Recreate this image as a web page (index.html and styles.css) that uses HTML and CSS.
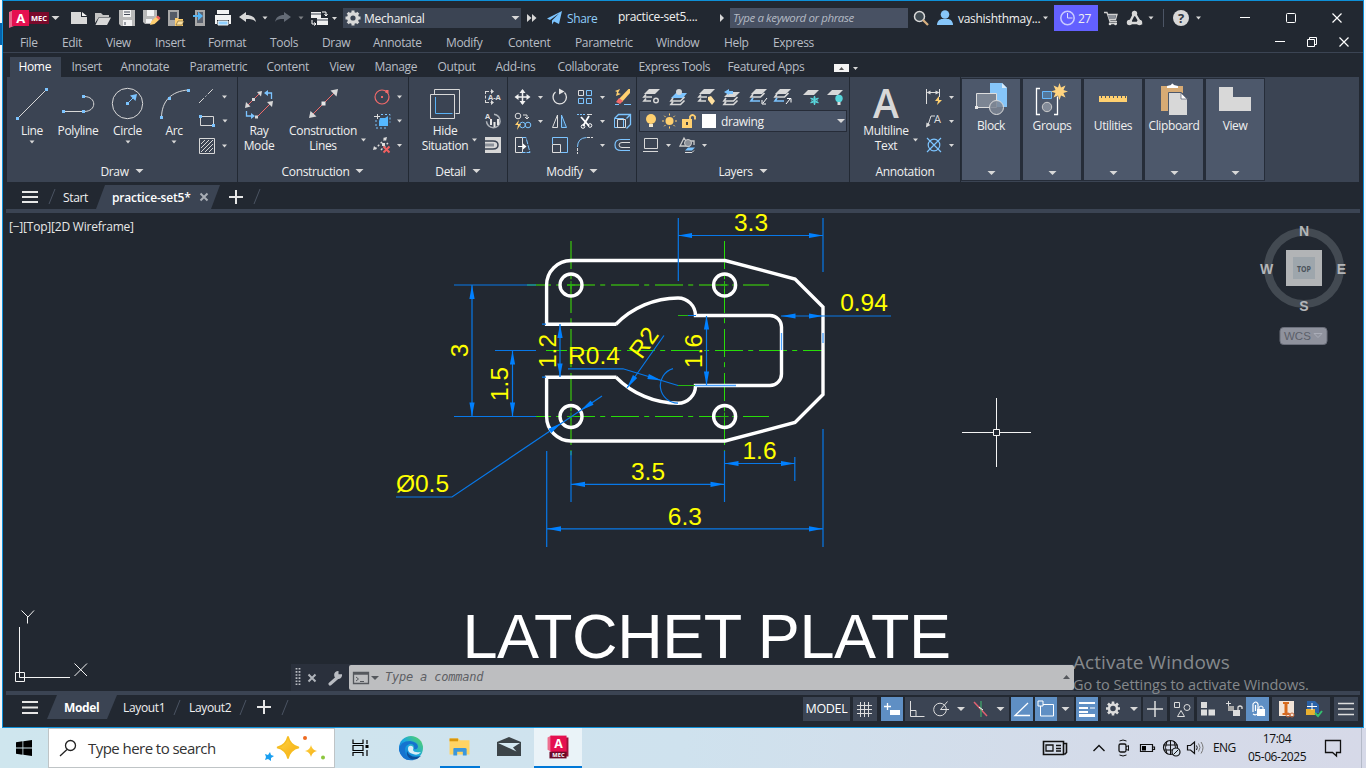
FILE: index.html
```html
<!DOCTYPE html>
<html lang="en">
<head>
<meta charset="utf-8">
<title>practice-set5</title>
<link rel="stylesheet" href="styles.css">
</head>
<body>
<svg class="defs" width="0" height="0">
  <defs>
    <path id="c" d="M-2.5-1.5h5L0 1.5z" fill="#d8d8d8"/>
    <path id="cc" d="M-4-2h8L0 2z" fill="#d8d8d8"/>
    <path id="arr" d="M0 0L14-2.6V2.6z" fill="#0080ff"/>
    <rect id="n" x="-1.5" y="-1.5" width="3" height="3" fill="#7cc4ff"/>
    <path id="lay" d="M5 0h11l-5 5H0z" fill="#d8d8d8"/>
    <path id="layl" d="M2 0L0 3h9.500l4-4" fill="none" stroke="#d8d8d8" stroke-width="1.700"/>
    <linearGradient id="edge" x1="0" y1="1" x2="1" y2="0"><stop offset="0" stop-color="#0a5bd0"/><stop offset=".5" stop-color="#1aa7e0"/><stop offset="1" stop-color="#5fdc50"/></linearGradient>
    <linearGradient id="gold" x1="0" y1="0" x2="1" y2="1"><stop offset="0" stop-color="#ffd84a"/><stop offset="1" stop-color="#f5a80c"/></linearGradient>
  </defs>
</svg>
<div class="window">
  <header class="titlebar">
    <svg width="57" height="31" viewBox="7 1 57 31"><path d="M9 12l5-2v16l-5 2z" fill="#e8668a"/><rect x="12" y="10" width="17" height="16" fill="#e51050"/><rect x="29" y="12" width="20" height="12" fill="#7a0a2b"/><text x="20.800" y="23" class="lgA">A</text><text x="39" y="21.300" class="lgM">MEC</text><use href="#cc" x="55.500" y="18"/></svg>
    <svg width="26" height="31" viewBox="64 1 26 31"><path d="M71 12h10v5h6v7H71z" fill="#d8d8d8"/><path d="M82 12l5 4h-5z" fill="#f2f2f2"/></svg>
    <svg width="25" height="31" viewBox="90 1 25 31"><path d="M95 13h6l2 2h6v2H99l-4 6z" fill="#c4c4c4"/><path d="M99 17.500h12L107 25H95.500z" fill="#d8d8d8"/></svg>
    <svg width="24" height="31" viewBox="115 1 24 31"><path d="M119 10h16v16h-14l-2-2z" fill="#b9b9b9"/><path d="M123 10h8v7h-8zM123 20h9v6h-9z" fill="#f4f4f4"/><path d="M124 12h6M124 14.500h6M125 22v3" stroke="#444b58"/></svg>
    <svg width="24" height="31" viewBox="139 1 24 31"><path d="M143 10h14v11l-5 3h-7l-2-2z" fill="#b9b9b9"/><path d="M147 10h7v6h-7zM146 19h6v4h-6z" fill="#f4f4f4"/><path d="M150 25l1.500-4 5-4.500 3 3-5 4.500z" fill="#ffcf70"/><path d="M156 17l2-1.500 2.500 2.500-1.500 2z" fill="#f06060"/></svg>
    <svg width="24" height="31" viewBox="163 1 24 31"><path d="M168 10h11v8h-4v8h-7z" fill="#a8a8a8"/><path d="M170 12h7v8h-7z" fill="#555b66"/><path d="M175 18h3l1 1h4v7h-8z" fill="#ffcf70"/><path d="M176 25l2-4h6l-2 4z" fill="#fbe0a0" stroke="#4b3d20" stroke-width=".5"/></svg>
    <svg width="24" height="31" viewBox="187 1 24 31"><path d="M195 10h10v16h-10z" fill="#a8a8a8"/><path d="M197 12h6v11h-6z" fill="#5d6470"/><path d="M193 15h5v-3.500l5 4.500-5 4.500V17h-5z" fill="#55b5f5"/></svg>
    <svg width="26" height="31" viewBox="211 1 26 31"><path d="M217 10h12v4h-12zM215 15h16v9h-2v-4h-12v4h-2z" fill="#f2f2f2"/><path d="M218 21h10v4h-10z" fill="#8fd0ff" stroke="#f2f2f2"/></svg>
    <svg width="35" height="31" viewBox="237 1 35 31"><path d="M239 17l7-5v3c6 0 9 2 10 7-3-3-5-3-10-3v3z" fill="#d8d8d8"/><use href="#c" x="265" y="18"/></svg>
    <svg width="36" height="31" viewBox="272 1 36 31"><path d="M291 17l-7-5v3c-5 0-8 2-9 7 2-3 4-3 9-3v3z" fill="#646b76"/><use href="#c" x="301" y="18" opacity=".5"/></svg>
    <svg width="35" height="31" viewBox="308 1 35 31"><path d="M311 12h10v6h-10zM317 18h11v7h-11z" fill="#f0f0f0"/><path d="M311 14h10M317 20h11" stroke="#3a4250"/><path d="M322 12h4v4M324.500 14l1.500 2 1.500-2M316 24h-4v-4M314 22.500l2 1.500-2 1.500" stroke="#fff" fill="none"/><use href="#c" x="334.500" y="18.500"/></svg>
    <div class="workspace"><svg width="26" height="20" viewBox="343 8 26 20"><g stroke="#d8d8d8" stroke-width="3"><path d="M353 10.500v15M345.500 18h15M347.700 12.700l10.600 10.600M358.300 12.700l-10.600 10.600"/></g><circle cx="353" cy="18" r="4.500" fill="none" stroke="#d8d8d8" stroke-width="3"/><circle cx="353" cy="18" r="2.600" fill="#3b4453"/></svg><span>Mechanical</span><svg class="end" width="14" height="20" viewBox="507 8 14 20"><use href="#cc" x="515.500" y="18"/></svg></div>
    <svg width="46" height="31" viewBox="521 1 46 31"><path d="M527 14l4.500 4-4.500 4zM532 14l4.500 4-4.500 4z" fill="#d8d8d8"/><path d="M547 18.500L562 11l-3 13-5-2.500-2 3v-4l7-7-9 6.500z" fill="#7cc4ff"/></svg>
    <span class="share">Share</span>
    <span class="doc">practice-set5....</span>
    <svg width="12" height="31" viewBox="718 1 12 31"><path d="M720 14l4 4-4 4z" fill="#d8d8d8"/></svg>
    <div class="search">Type a keyword or phrase</div>
    <svg width="50" height="31" viewBox="908 1 50 31"><circle cx="919.500" cy="16.500" r="5" fill="#3f4a52" stroke="#d8d8d8" stroke-width="1.500"/><path d="M923 20l5 5" stroke="#d8b080" stroke-width="2.300"/><circle cx="945" cy="14.500" r="4.300" fill="#86c6fa"/><path d="M937 25c0-4 3-6 5-6h6c2 0 5 2 5 6z" fill="#86c6fa"/></svg>
    <span class="user">vashishthmay...</span>
    <svg width="14" height="31" viewBox="1040 1 14 31"><use href="#c" x="1045.500" y="18"/></svg>
    <div class="trial"><svg width="24" height="26" viewBox="1054 5 24 26"><circle cx="1067.500" cy="18" r="6.700" fill="none" stroke="#c9cbff" stroke-width="1.500"/><path d="M1067.500 13v5h5" stroke="#dcdcff" fill="none"/></svg><span>27</span></div>
    <svg width="120" height="31" viewBox="1098 1 120 31"><path d="M1104 12.500h3l3 9h7M1108 14.500h9l-1.500 5h-6M1109 23.500h8" stroke="#d0d0d0" fill="none" stroke-width="1.300"/><path d="M1108 15h8l-1 4h-6z" fill="#8b9098"/><circle cx="1110" cy="24" r="1.300" fill="#ddd"/><circle cx="1115.500" cy="24" r="1.300" fill="#ddd"/><path d="M1134.500 13l-5 10h11z" fill="none" stroke="#d8d8d8" stroke-width="2.400"/><circle cx="1134.500" cy="13.500" r="2.700" fill="#d8d8d8"/><circle cx="1129.500" cy="22.500" r="2.700" fill="#d8d8d8"/><circle cx="1139.500" cy="22.500" r="2.700" fill="#d8d8d8"/><use href="#c" x="1151" y="18"/><path d="M1163.500 9v18" stroke="#4c5565"/><circle cx="1181" cy="18" r="8" fill="#d8d8d8"/><text x="1181" y="23" class="help">?</text><use href="#c" x="1198.500" y="18"/></svg>
    <svg class="end" width="124" height="31" viewBox="1235 1 124 31"><path d="M1240 17.500h10M1332.500 13.500l9 9M1341.500 13.500l-9 9" stroke="#fff" stroke-width="1.200"/><rect x="1286.500" y="13.500" width="9" height="9" rx="1" fill="none" stroke="#fff"/></svg>
  </header>
  <nav class="menubar"><span>File</span><span>Edit</span><span>View</span><span>Insert</span><span>Format</span><span>Tools</span><span>Draw</span><span>Annotate</span><span>Modify</span><span>Content</span><span>Parametric</span><span>Window</span><span>Help</span><span>Express</span>
    <svg width="84" height="20" viewBox="1270 32 84 20"><path d="M1275 41.500h10M1339.500 37.500l9 9M1348.500 37.500l-9 9" stroke="#fff" stroke-width="1.200"/><path d="M1307.500 39.500h7v7h-7zM1309.500 39v-1.500h7v7h-1.500" fill="none" stroke="#fff"/></svg>
  </nav>
  <nav class="tabs"><span class="active">Home</span><span>Insert</span><span>Annotate</span><span>Parametric</span><span>Content</span><span>View</span><span>Manage</span><span>Output</span><span>Add-ins</span><span>Collaborate</span><span>Express Tools</span><span>Featured Apps</span><svg width="30" height="20" viewBox="833 57 30 20"><path d="M835 64h15v8h-15z" fill="#f4f4f4"/><path d="M840 70h5l-2.500-3z" fill="#555"/><use href="#c" x="856.500" y="68.500"/></svg></nav>

  <section class="ribbon">
    <div class="panel p-draw"><div class="tools">
      <div class="big w44"><svg width="44" height="40" viewBox="10 83 44 40"><path d="M18 118L46 90" stroke="#d8d8d8"/><use href="#n" x="17.500" y="118.500"/><use href="#n" x="46.500" y="89.500"/></svg><b>Line</b><svg width="8" height="8" viewBox="-4 -4 8 8"><use href="#c"/></svg></div>
      <div class="big w48"><svg width="48" height="40" viewBox="54 83 48 40"><path d="M63 111.500h21c13 0 13-15 0-15" stroke="#d8d8d8" fill="none"/><use href="#n" x="63.500" y="111.500"/><use href="#n" x="83.500" y="111.500"/><use href="#n" x="83.500" y="96.500"/></svg><b>Polyline</b></div>
      <div class="big w51"><svg width="51" height="40" viewBox="102 83 51 40"><circle cx="127.500" cy="103.500" r="15.200" stroke="#d8d8d8" fill="none"/><path d="M127 104l7-7" stroke="#7cc4ff"/><path d="M137 94l-1.500 7-5.500-5.500z" fill="#7cc4ff"/><use href="#n" x="127.500" y="103.500"/></svg><b>Circle</b><svg width="8" height="8" viewBox="-4 -4 8 8"><use href="#c"/></svg></div>
      <div class="big w42"><svg width="42" height="40" viewBox="153 83 42 40"><path d="M161.500 118c0-17 10-27 27-28" stroke="#d8d8d8" fill="none"/><use href="#n" x="161.500" y="117.500"/><use href="#n" x="169.500" y="98.500"/><use href="#n" x="188.500" y="90.500"/></svg><b>Arc</b><svg width="8" height="8" viewBox="-4 -4 8 8"><use href="#c"/></svg></div>
      <div class="small">
        <svg width="40" height="24" viewBox="195 85 40 24"><path d="M199 103l15-15" stroke="#d8d8d8" stroke-dasharray="7 2 1.500 2"/><use href="#c" x="224.500" y="97"/></svg>
        <svg width="40" height="24" viewBox="195 109 40 24"><path d="M200.500 116.500h13v9h-13z" stroke="#d8d8d8" fill="none"/><use href="#n" x="200.500" y="116.500"/><use href="#n" x="213.500" y="125.500"/><use href="#c" x="225" y="121"/></svg>
        <svg width="40" height="24" viewBox="195 133 40 24"><path d="M199.500 138.500h15v15h-15z" stroke="#d8d8d8" fill="none"/><path d="M201 144l4-4M201 148l8-8M201 152l12-12M205 152l8-8M209 152l4-4" stroke="#d8d8d8"/><use href="#c" x="224.500" y="146"/></svg>
      </div>
    </div><footer>Draw<svg width="9" height="6" viewBox="-4.500 -3 9 6"><use href="#cc"/></svg></footer></div>
    <div class="panel p-cons"><div class="tools">
      <div class="big w42"><svg width="42" height="40" viewBox="238 83 42 40"><path d="M247 106l13-13M256 118l14-14" stroke="#f06a6a"/><path d="M245 108l1-6 4.500 4.500zM262 91l-5 1 4 4.500zM273 101l-6 1 5 5z" fill="#d8d8d8"/><path d="M252 98h3v3h-3zM255 115.500h3v3h-3z" fill="#d8d8d8"/><path d="M271.500 99v-6h-5M246.500 111v5h5" stroke="#7cc4ff" fill="none" stroke-width="1.300"/><path d="M264 93l4-3v6zM255 116l-4-3v6z" fill="#7cc4ff"/></svg><b>Ray<br>Mode</b></div>
      <div class="big w70"><svg width="70" height="40" viewBox="288 83 70 40"><path d="M312 115l24-24" stroke="#f06a6a"/><path d="M309 118l1.500-7 6 5.500zM338 89l-7.500 1.500 6 6z" fill="#d8d8d8"/><path d="M321.500 101.500h4v4h-4z" fill="#e8e8e8"/></svg><b>Construction<br>Lines</b></div>
      <svg width="10" height="80" viewBox="358 83 10 80"><use href="#c" x="363.500" y="140"/></svg>
      <div class="small">
        <svg width="36" height="24" viewBox="368 85 36 24"><circle cx="382" cy="97" r="7" stroke="#f06a6a" fill="none" stroke-width="1.200"/><path d="M381 96h2v2h-2zM385.500 90h3v3h-3z" fill="#f06a6a"/><use href="#c" x="399.500" y="97"/></svg>
        <svg width="36" height="24" viewBox="368 109 36 24"><path d="M380 118h5l3-2v10h-9v-5z" fill="#55b8ff"/><path d="M374 116.500h6M377.500 114v5" stroke="#ddd"/><path d="M376 120v8h12M381 114.500h9v8" fill="none" stroke="#7cc4ff" stroke-dasharray="2 2"/><use href="#c" x="399.500" y="121"/></svg>
        <svg width="36" height="24" viewBox="368 133 36 24"><path d="M375 149l10-10M381 150l7-7" stroke="#d8d8d8" stroke-dasharray="2 2" stroke-width="1.500"/><path d="M373 150l1-4 3 3zM387 137l-4 1 3 3zM382 143h3v3h-3z" fill="#ddd"/><path d="M383.500 146.500l6 6M389.500 146.500l-6 6" stroke="#f06060" stroke-width="2"/><use href="#c" x="399.500" y="145.500"/></svg>
      </div>
    </div><footer>Construction<svg width="9" height="6" viewBox="-4.500 -3 9 6"><use href="#cc"/></svg></footer></div>
    <div class="panel p-detail"><div class="tools">
      <div class="big w50"><svg width="50" height="40" viewBox="420 83 50 40"><path d="M434.500 94v-4.500h25v24h-4" stroke="#d8d8d8" fill="none"/><path d="M430.500 94.500h24v24h-24z" fill="none" stroke="#d8d8d8"/><path d="M435.500 97v16.500h17" fill="none" stroke="#5ab2f5"/></svg><b>Hide<br>Situation</b></div>
      <svg width="10" height="80" viewBox="470 83 10 80"><use href="#c" x="474.500" y="140"/></svg>
      <div class="small">
        <svg width="26" height="24" viewBox="480 85 26 24"><path d="M485.500 91v13M486 91.500h6M486 102.500h6" stroke="#d8d8d8" stroke-dasharray="3 1.500"/><path d="M491 89l3 2.500-3 2.500zM491 100l3 2.500-3 2.500z" fill="#ddd"/><text x="488" y="99.500" class="aa">A-A</text></svg>
        <svg width="26" height="24" viewBox="480 109 26 24"><text x="485" y="119" class="aa">A</text><path d="M494 114.200a6.800 6.800 0 1 1-7.500 7" fill="none" stroke="#aeb3ba" stroke-width="1.500"/><path d="M490 119h2v6h-2zM493.500 122h2v5h-2zM497 119h2v6h-2z" fill="#e6e6e6"/></svg>
        <svg width="26" height="24" viewBox="480 133 26 24"><path d="M485 137h16v16h-16z" fill="#d8d8d8"/><path d="M485 141h8q5 0 5 4t-5 4h-8" stroke="#3b4453" stroke-width="1.500" fill="none"/><path d="M485 145h9" stroke="#8a9099" stroke-width="3"/></svg>
      </div>
    </div><footer>Detail<svg width="9" height="6" viewBox="-4.500 -3 9 6"><use href="#cc"/></svg></footer></div>
    <div class="panel p-modify"><div class="tools grid4">
      <svg width="38" height="24" viewBox="510 85 38 24"><path d="M516 97h13M522.500 90v14" stroke="#f2f2f2" stroke-width="1.500"/><path d="M522.500 89l3 4h-6zM522.500 105l3-4h-6zM514.500 97l4-3v6zM530.500 97l-4-3v6z" fill="#f2f2f2"/><use href="#c" x="540.500" y="97.500"/></svg>
      <svg width="24" height="24" viewBox="548 85 24 24"><path d="M555.500 92a6.700 6.700 0 1 0 9 0.500" fill="none" stroke="#e6e6e6" stroke-width="1.300"/><path d="M559 88.500l5.500 3-5.500 3z" fill="#e6e6e6"/></svg>
      <svg width="38" height="24" viewBox="572 85 38 24"><path d="M578.500 90.500h5v5h-5z" stroke="#ddd" fill="none"/><path d="M586.500 90.500h5v5h-5zM578.500 98.500h5v5h-5zM586.500 98.500h5v5h-5z" stroke="#7cc4ff" fill="none"/><use href="#c" x="602.500" y="97.500"/></svg>
      <svg width="24" height="24" viewBox="610 85 24 24"><path d="M618.500 99.500l10-10.500h1.500v4l-8 9z" fill="#ffd070"/><path d="M616 102l3-4 4 3-3 3z" fill="#f36a6a"/><path d="M615 91l5-2-2 4 3 1-5 2 1-4z" fill="#ffd070"/><path d="M615 104.500h4M624 104.500h7" stroke="#7cc4ff"/></svg>
      <svg width="38" height="24" viewBox="510 109 38 24"><circle cx="518" cy="116" r="2.800" fill="none" stroke="#ddd"/><path d="M523 115h4v4M525 117l2 2 2-2" stroke="#ddd" fill="none"/><circle cx="522.500" cy="125" r="2.800" fill="none" stroke="#7cc4ff"/><circle cx="528" cy="125" r="2.800" fill="none" stroke="#7cc4ff"/><path d="M519 120l-4 5h3l-1 5 4-6h-3z" fill="#ffd070"/><use href="#c" x="540.500" y="121.500"/></svg>
      <svg width="24" height="24" viewBox="548 109 24 24"><path d="M557.500 115v12.500h-5z" fill="none" stroke="#ddd"/><path d="M561.500 115v12.500h5z" fill="#3c5a78" stroke="#7cc4ff"/></svg>
      <svg width="38" height="24" viewBox="572 109 38 24"><path d="M577 114.500h9" stroke="#7cc4ff" stroke-dasharray="2 1"/><path d="M587 114.500h5" stroke="#ddd"/><path d="M581 117l8 9M589 116l-6 10" stroke="#fff" stroke-width="1.800"/><circle cx="583" cy="126.500" r="1.800" fill="none" stroke="#fff"/><circle cx="590" cy="125.500" r="1.800" fill="none" stroke="#fff"/><use href="#c" x="602.500" y="121.500"/></svg>
      <svg width="24" height="24" viewBox="610 109 24 24"><path d="M614.500 118.500l4-4h12v10l-4 4M626.500 118.500l4-4" fill="none" stroke="#7cc4ff" stroke-width="1.300"/><path d="M614.500 118.500h9v9h-9z" fill="none" stroke="#7cc4ff"/><path d="M617.500 119.500h8v8h-8z" fill="none" stroke="#ddd"/></svg>
      <svg width="38" height="24" viewBox="510 133 38 24"><path d="M515.500 137.500h7v15h-7z" fill="none" stroke="#ddd"/><path d="M522 137.500h4l4 15h-8" fill="none" stroke="#7cc4ff" stroke-dasharray="5 1"/><path d="M518 146h5v-2.500l3.500 3-3.500 3V147h-5z" fill="#fff"/></svg>
      <svg width="24" height="24" viewBox="548 133 24 24"><path d="M552.500 144v-6.500h15v15h-7" fill="none" stroke="#7cc4ff"/><path d="M552.500 144.500h8v8h-8z" fill="none" stroke="#ddd"/></svg>
      <svg width="38" height="24" viewBox="572 133 38 24"><path d="M577.500 147q0-9 9-9.500" fill="none" stroke="#7cc4ff"/><path d="M587 137.500h6M577.500 148v6" stroke="#ddd" stroke-dasharray="3 1"/><use href="#c" x="602.500" y="145.500"/></svg>
      <svg width="24" height="24" viewBox="610 133 24 24"><path d="M630 139.500h-9q-6 0-6 5.500t6 5.500h9" fill="none" stroke="#7cc4ff" stroke-width="1.200"/><path d="M630 142.500h-8q-3 0-3 2.500t3 2.500h8" fill="none" stroke="#ddd"/></svg>
    </div><footer>Modify<svg width="9" height="6" viewBox="-4.500 -3 9 6"><use href="#cc"/></svg></footer></div>
    <div class="panel p-layers"><div class="stack">
      <svg width="212" height="25" viewBox="637 85 212 25">
        <g transform="translate(644 89)"><use href="#lay"/><path d="M2 5.500L0 8h8M2 9.500L0 12h7" fill="none" stroke="#d8d8d8" stroke-width="1.700"/><circle cx="12" cy="11.500" r="2.300" fill="none" stroke="#d8d8d8" stroke-width="1.400"/></g>
        <g transform="translate(671 91)"><path d="M5 2h11l-4 5H0z" fill="#7cc4ff"/><circle cx="8" cy="1" r="3" fill="#d0d3d6"/><use href="#layl" y="7"/><use href="#layl" y="10.500"/></g>
        <g transform="translate(699 89)"><use href="#lay"/><path d="M2 5.500L0 8h8M2 9.500L0 12h7" fill="none" stroke="#d8d8d8" stroke-width="1.700"/><path d="M9 8l3-1 4 5-3 4-4-5z" fill="#ffe0a0"/></g>
        <g transform="translate(724 93)"><use href="#lay" y="-1"/><use href="#layl" y="5"/><use href="#layl" y="8.500"/><path d="M0-1l5-3v2h4v3H5v1z" fill="#7cc4ff"/></g>
        <g transform="translate(751 89)"><use href="#lay"/><use href="#layl" y="5"/><path d="M2 9L0 12h9" stroke="#7cc4ff" fill="none" stroke-width="1.700"/><path d="M16 9l-4 5M11 11v4h4" stroke="#fff" fill="none"/></g>
        <g transform="translate(775 89)"><use href="#lay"/><use href="#layl" y="5"/><path d="M2 9L0 12h9" stroke="#7cc4ff" fill="none" stroke-width="1.700"/><path d="M11 15l4-5M12 9.500h4v4" stroke="#fff" fill="none"/></g>
        <g transform="translate(803 90)"><use href="#lay"/><path d="M11.500 6v9M7.500 8l8 5M15.500 8l-8 5" stroke="#58d6dc" stroke-width="1.300"/><circle cx="11.500" cy="10.500" r="2.700" fill="none" stroke="#58d6dc"/></g>
        <g transform="translate(827 90)"><use href="#lay"/><circle cx="12" cy="8.500" r="3.700" fill="#58d6dc"/><path d="M10.500 12h3v3h-3z" fill="#ddd"/></g>
      </svg>
      <div class="layer"><svg width="81" height="20" viewBox="640 111 81 20"><circle cx="651" cy="119" r="5" fill="#ffd070"/><path d="M649 124h4v3h-4z" fill="#f4e9d0"/><circle cx="669.500" cy="121" r="4" fill="#ffd070"/><path d="M669.500 113.500v15M662 121h15M664.200 115.700l10.600 10.600M674.800 115.700l-10.600 10.600" stroke="#ffd070" stroke-dasharray="2 11"/><path d="M682 119h10v9h-10z" fill="#ffd070"/><path d="M690 119v-2.500q2.500-3 5 0v3" stroke="#ffd070" fill="none" stroke-width="1.800"/><path d="M686 122h2v3h-2z" fill="#444"/><path d="M702 114h14v14h-14z" fill="#fff"/></svg><span>drawing</span><svg class="end" width="13" height="20" viewBox="833 111 13 20"><use href="#cc" x="841" y="121"/></svg></div>
      <svg width="212" height="25" viewBox="637 132 212 25"><path d="M644.500 138.500h13v10h-13zM643 151.500h15" fill="none" stroke="#d8d8d8"/><use href="#c" x="668.500" y="145.500"/><path d="M680 146l4-8 5 8zM690 141h4v4" fill="none" stroke="#ccc" stroke-width="1.300"/><circle cx="688" cy="143" r="3.500" fill="#8b9098" stroke="#ccc"/><path d="M688 147.500h7l-3 3h-7z" fill="#7cc4ff"/><path d="M685 152.500h7l2-2" stroke="#ddd" fill="none"/><use href="#c" x="704.500" y="145.500"/></svg>
    </div><footer>Layers<svg width="9" height="6" viewBox="-4.500 -3 9 6"><use href="#cc"/></svg></footer></div>
    <div class="panel p-annot"><div class="tools">
      <div class="big w50"><svg class="spill" width="50" height="40" viewBox="861 83 50 40"><text x="886" y="118" class="bigA">A</text></svg><b>Multiline<br>Text</b></div>
      <svg width="10" height="80" viewBox="911 83 10 80"><use href="#c" x="915.500" y="140"/></svg>
      <div class="small">
        <svg width="36" height="24" viewBox="921 85 36 24"><path d="M926.500 89v15M939.500 89v8M928 92.500h10" stroke="#ddd"/><path d="M926.500 92.500l4-2v4zM939.500 92.500l-4-2v4z" fill="#ddd"/><path d="M939 96l-4 5h3l-1 4 5-5h-3z" fill="#ffd070"/><use href="#c" x="951.500" y="97.500"/></svg>
        <svg width="36" height="24" viewBox="921 109 36 24"><path d="M928 125l3-9h4" stroke="#ddd" fill="none"/><path d="M926 127.500l.5-5 4 2.500z" fill="#ddd"/><text x="934" y="122.500" class="ldr">A</text><use href="#c" x="951.500" y="121.500"/></svg>
        <svg width="36" height="24" viewBox="921 133 36 24"><circle cx="934" cy="145" r="5.800" fill="none" stroke="#7cc4ff" stroke-width="1.200"/><path d="M927 138l14 14M941 138l-14 14" stroke="#7cc4ff" stroke-width="1.200"/><use href="#c" x="951.500" y="145.500"/></svg>
      </div>
    </div><footer>Annotation</footer></div>
    <div class="folded">
      <div><svg width="58" height="39" viewBox="962 79 58 39"><path d="M990 83h12l5 5v19h-17z" fill="#86c6fa"/><path d="M1002 83v5h5z" fill="#d8ecfb"/><path d="M976.500 93.500h20v14h-20z" fill="#7c8593" stroke="#ddd"/><circle cx="996.500" cy="107.500" r="7" fill="#7c8593" fill-opacity=".85" stroke="#ddd"/><path d="M975 106h3v3h-3z" fill="#e8e8e8"/></svg><b>Block</b><svg class="down" width="9" height="6" viewBox="-4.500 -3 9 6"><use href="#cc"/></svg></div>
      <div><svg width="58" height="39" viewBox="1023 79 58 39"><path d="M1040 88.500h-3.500v26h3.500M1054 114.500h3.500v-18" fill="none" stroke="#fff" stroke-width="1.300"/><path d="M1042.500 91.500h9v7h-9z" fill="#54779a" stroke="#66baff"/><circle cx="1047" cy="107" r="4.700" fill="#838b98" stroke="#ccc"/><path d="M1059.500 83l1.500 4.500 4.500-2-2 4.500 4.500 1.500-4.500 1.500 2 4.500-4.500-2-1.500 4.500-1.500-4.500-4.500 2 2-4.500-4.500-1.500 4.500-1.500-2-4.500 4.500 2z" fill="#ffd480"/></svg><b>Groups</b><svg class="down" width="9" height="6" viewBox="-4.500 -3 9 6"><use href="#cc"/></svg></div>
      <div><svg width="58" height="39" viewBox="1084 79 58 39"><path d="M1099 96h28v6h-28z" fill="#ffd070"/><path d="M1101.500 96v2M1105.500 96v2M1109.500 96v2M1113.500 96v2M1117.500 96v2M1121.500 96v2M1125.500 96v2" stroke="#4d5768"/></svg><b>Utilities</b><svg class="down" width="9" height="6" viewBox="-4.500 -3 9 6"><use href="#cc"/></svg></div>
      <div><svg width="58" height="39" viewBox="1145 79 58 39"><path d="M1161 86h22v25h-22z" fill="#d8ab74"/><path d="M1167 88v-2l4-1q1-3 3 0l4 1v2z" fill="#fff"/><path d="M1168.500 92.500h13l6 6v17h-19z" fill="#d8d8d8" stroke="#4d586b"/><path d="M1181 93v6h6z" fill="#fff" stroke="#4d586b" stroke-width=".7"/></svg><b>Clipboard</b><svg class="down" width="9" height="6" viewBox="-4.500 -3 9 6"><use href="#cc"/></svg></div>
      <div><svg width="58" height="39" viewBox="1206 79 58 39"><path d="M1219 87h14v10h18v14h-32z" fill="#d8d8d8"/></svg><b>View</b><svg class="down" width="9" height="6" viewBox="-4.500 -3 9 6"><use href="#cc"/></svg></div>
    </div>
  </section>

  <div class="doctabs">
    <svg width="56" height="24" viewBox="7 185 56 24"><path d="M22 192h16M22 197h16M22 202h16" stroke="#e6e6e6" stroke-width="2"/><path d="M49 204l6-15" stroke="#4a5362"/></svg>
    <span class="start">Start</span>
    <div class="doctab"><span>practice-set5*</span><svg width="12" height="12" viewBox="198 191 12 12"><path d="M200.500 193.500l7 7M207.500 193.500l-7 7" stroke="#a9aeb6" stroke-width="2"/></svg></div>
    <svg width="50" height="24" viewBox="220 185 50 24"><path d="M229 197h14M236 190v14" stroke="#e6e6e6" stroke-width="2"/><path d="M254 204l6-15" stroke="#4a5362"/></svg>
  </div>

  <main class="canvas">
    <svg width="1360" height="482" viewBox="3 209 1360 482">
      <g stroke="#36a813" stroke-width="1.500" fill="none" stroke-dasharray="28 5.200 5 5.800">
        <path d="M571 241v220"/><path d="M724.500 241v210" stroke="#28dc08" stroke-width="1"/><path d="M527 285h242" stroke-dashoffset="4"/><path d="M527 416.500h242" stroke-dashoffset="4" stroke="#28dc08" stroke-width="1"/><path d="M546 350.500h277" stroke-dashoffset="7" stroke="#28dc08" stroke-width="1"/>
      </g>
      <g fill="none" stroke="#fff" stroke-width="3.400">
        <path d="M616.500 324.200H546.600V285A24.500 24.500 0 0 1 571 260.500H725L795 279L823 307V394.500L795 422.500L725 441H571A24.500 24.500 0 0 1 546.600 416.500V377.200H616.500"/>
        <path d="M616 324.200A88 88 0 0 1 678 298A17.600 17.600 0 0 1 695.500 315.500H770A11.500 11.500 0 0 1 781.500 327V374A11.500 11.500 0 0 1 770 385.500H695.500A17.600 17.600 0 0 1 678 403.300A88 88 0 0 1 616 377.200"/>
        <circle cx="571" cy="285" r="11"/><circle cx="724.600" cy="285" r="11"/><circle cx="571" cy="416.500" r="11"/><circle cx="724.600" cy="416.500" r="11"/>
      </g>
      <path d="M567 285h8M571 281v8M567 416.500h8M571 412.500v8M720.600 285h8M724.500 281v8M720.600 416.500h8M724.500 412.500v8" stroke="#28b810" fill="none"/>
      <g fill="none" stroke="#0878e8" stroke-width="1.200">
        <path d="M678.300 218v63M823 218v54M678 235.500h145M781 316h110M454 285h82M454 416.500h82M472 285v131M495 350.500h41M512.500 351v65M560 324v53M706.500 316v69M571 451v51M724.500 451v51M571 484.300h154M724.500 463.500h70M794.800 457v24M546.700 451v96M823 429v118M547 528.800h276M568 368.800h55L678 385.500M673 368.600a17.600 17.600 0 0 0 5 34.500M664 335.500L627 388M396 497h56L602 396M542 324.200h4M542 377.200h4M688 315.500h8"/>
      </g>
      <path d="M695 385.500h41M781.500 333v17M823 333v10" stroke="#4aa2ff" stroke-width="1.300" fill="none"/>
      <path d="M678 315.500h10M678 385.500h17" stroke="#28b810" fill="none" stroke-width="1.200"/>
      <use href="#arr" transform="translate(678 235.500)"/><use href="#arr" transform="translate(823 235.500) rotate(180)"/>
      <use href="#arr" transform="translate(781.500 316)"/><use href="#arr" transform="translate(823 316) rotate(180)"/>
      <use href="#arr" transform="translate(472 285) rotate(90)"/><use href="#arr" transform="translate(472 416.500) rotate(-90)"/>
      <use href="#arr" transform="translate(512.500 350.500) rotate(90)"/><use href="#arr" transform="translate(512.500 416.500) rotate(-90)"/>
      <use href="#arr" transform="translate(560 324) rotate(90)"/><use href="#arr" transform="translate(560 377.500) rotate(-90)"/>
      <use href="#arr" transform="translate(706.500 315.500) rotate(90)"/><use href="#arr" transform="translate(706.500 385.500) rotate(-90)"/>
      <use href="#arr" transform="translate(571 484.300)"/><use href="#arr" transform="translate(724.500 484.300) rotate(180)"/>
      <use href="#arr" transform="translate(724.500 463.500)"/><use href="#arr" transform="translate(795 463.500) rotate(180)"/>
      <use href="#arr" transform="translate(547 528.800)"/><use href="#arr" transform="translate(823 528.800) rotate(180)"/>
      <use href="#arr" transform="translate(661.500 380.500) rotate(197)"/><use href="#arr" transform="translate(627 388) rotate(-54.700)"/>
      <use href="#arr" transform="translate(561.500 423) rotate(146)"/><use href="#arr" transform="translate(580.500 410.500) rotate(-34)"/>
      <g class="dim">
        <text x="751" y="230.500">3.3</text><text x="864" y="311">0.94</text><text x="594" y="364">R0.4</text><text x="422.500" y="491.500">Ø0.5</text><text x="648" y="479.500">3.5</text><text x="759.500" y="458.500">1.6</text><text x="684.800" y="524.500">6.3</text>
        <text transform="translate(468 350.500) rotate(-90)">3</text><text transform="translate(508 384) rotate(-90)">1.5</text><text transform="translate(556 351) rotate(-90)">1.2</text><text transform="translate(702 351) rotate(-90)">1.6</text><text transform="translate(650.500 347.500) rotate(-54.700)">R2</text>
      </g>
      <path d="M6 209h1354v4H6z" fill="#3b4453"/>
      <text x="462.500" y="658" class="heading" textLength="488.500">LATCHET PLATE</text>
      <text x="9" y="231" class="vp" textLength="125">[−][Top][2D Wireframe]</text>
      <path d="M962 432.500h31M1000 432.500h31M996.500 398v31M996.500 436v31M993.500 429.500h6v6h-6z" stroke="#f4f4f4" fill="none"/>
      <path d="M19.500 627v50.500h50.500M15.500 672.500h9v9h-9zM21.500 610.500l6.500 6.500 6-6.500M27.500 617v6.500M74.500 663.500l12.500 12.500M87 663.500l-12.500 12.500" stroke="#f4f4f4" fill="none"/>
      <circle cx="1304" cy="268" r="36" fill="none" stroke="#434a52" stroke-width="8"/>
      <path d="M1286 250h36v36h-36z" fill="#b2b4b6"/><path d="M1293 257h22v22h-22z" fill="#9ea6ac"/>
      <g class="compass"><text x="1304" y="236">N</text><text x="1304" y="311">S</text><text x="1266.500" y="273.500">W</text><text x="1341.500" y="273.500">E</text></g>
      <text x="1304" y="271.500" class="top" textLength="14" lengthAdjust="spacingAndGlyphs">TOP</text>
      <rect x="1280" y="327.500" width="47" height="17" rx="3.500" fill="#8f929d" stroke="#6b6f7b"/><text x="1284" y="339.500" class="wcs">WCS</text><path d="M1314 333.500h8l-4 4z" fill="none" stroke="#aaadb8"/>
    </svg>
    <div class="watermark"><p>Activate Windows</p><p>Go to Settings to activate Windows.</p></div>
    <div class="cmd">
      <svg width="58" height="27" viewBox="291 664 58 27"><path d="M296.500 668v18M299.500 668v18" stroke="#b9bcc2" stroke-width="1.800" stroke-dasharray="1.600 1.500"/><path d="M308.500 674.500l7 7M315.500 674.500l-7 7" stroke="#b0b4bb" stroke-width="2"/><path d="M330 684l8-7" stroke="#b9bcc2" stroke-width="3.200" stroke-linecap="round"/><path d="M342 674a4 4 0 1 1-3.500-3v3.200h3.400" fill="#b9bcc2"/></svg>
      <div class="prompt"><svg width="36" height="25" viewBox="349 665 36 25"><path d="M353.500 672.500h15v11h-15zM354 674h14" fill="none" stroke="#55585d" stroke-width="1.300"/><path d="M356 677l2.500 2-2.500 2M360 681.500h4" fill="none" stroke="#55585d"/><path d="M371 676h8l-4 4z" fill="#55585d"/></svg><span>Type a command</span><svg class="end" width="14" height="25" viewBox="1060 665 14 25"><path d="M1063 679h7l-3.500-4z" fill="#55585d"/></svg></div>
    </div>
  </main>

  <footer class="layoutbar">
    <svg width="40" height="32" viewBox="7 695 40 32"><path d="M22 702h16M22 707.500h16M22 713h16" stroke="#e6e6e6" stroke-width="2"/></svg>
    <div class="model">Model</div>
    <span class="lay1">Layout1</span><svg width="14" height="32" viewBox="169 695 14 32"><path d="M174 715l6-15" stroke="#4a5362"/></svg><span class="lay2">Layout2</span>
    <svg width="60" height="32" viewBox="238 695 60 32"><path d="M257 707h14M264 700v14" stroke="#e6e6e6" stroke-width="2"/><path d="M240 715l6-15M282 715l6-15" stroke="#4a5362"/></svg>
    <div class="status">
      <span class="mode">MODEL</span>
      <svg class="btn m1" width="24" height="24" viewBox="853 697 24 24"><path d="M860.500 702v15M864.500 702v15M868.500 702v15M857 705.500h15M857 709.500h15M857 713.500h15" stroke="#ddd"/></svg>
      <svg class="btn on m2" width="22" height="24" viewBox="881 697 22 24"><path d="M884 706.500h7M887.500 703v7" stroke="#fff" stroke-width="1.300"/><path d="M890 710h10v5h-10z" fill="#fff"/></svg>
      <svg class="btn" width="104" height="24" viewBox="905 697 104 24"><path d="M910.500 701v15.500h14M911 710.500h5v6" stroke="#ddd" fill="none"/><circle cx="940" cy="709.500" r="6.300" fill="none" stroke="#ddd"/><path d="M949 709.500h-8.500l7-8" fill="none" stroke="#ddd"/><use href="#cc" x="961" y="709"/><path d="M974 702l13 14" stroke="#e06070" stroke-width="1.500"/><path d="M981 701v16" stroke="#40c070"/><path d="M979 707l4 3" stroke="#fff"/><use href="#cc" x="1000.500" y="709"/></svg>
      <svg class="btn on" width="22" height="24" viewBox="1011 697 22 24"><path d="M1028 703l-13 12.500h15" stroke="#fff" fill="none" stroke-width="1.300"/></svg>
      <svg class="btn" width="39" height="24" viewBox="1035 697 39 24"><path d="M1035 697h22v24h-22z" fill="#5f8fc4"/><path d="M1040.500 704.500h13v11.500h-13z" fill="none" stroke="#fff"/><path d="M1038 701h5v5h-5z" fill="#5f8fc4" stroke="#fff"/><use href="#cc" x="1065.500" y="709"/></svg>
      <svg class="btn on" width="22" height="24" viewBox="1076 697 22 24"><path d="M1079 703h16M1079 708h9M1079 712h9" stroke="#fff" stroke-width="2"/><path d="M1079 715.500h16" stroke="#fff" stroke-width="3"/><path d="M1090 708h5" stroke="#fff"/></svg>
      <svg class="btn m1" width="40" height="24" viewBox="1101 697 40 24"><g stroke="#ddd" stroke-width="2.600"><path d="M1113 701.500v14M1106 708.500h14M1108 703.500l10 10M1118 703.500l-10 10"/></g><circle cx="1113" cy="708.500" r="4" fill="#3b4453" stroke="#ddd" stroke-width="2.500"/><use href="#cc" x="1134" y="709"/></svg>
      <svg class="btn" width="24" height="24" viewBox="1143 697 24 24"><path d="M1147 709h16M1155 701v16" stroke="#ddd" stroke-width="1.500"/></svg>
      <svg class="btn m1" width="24" height="24" viewBox="1170 697 24 24"><path d="M1174.500 702.500h5v5h-5zM1181 710.500l3.500 6h-7z" fill="none" stroke="#ddd"/><circle cx="1187" cy="707.500" r="3" fill="none" stroke="#ddd"/></svg>
      <svg class="btn m1" width="49" height="24" viewBox="1197 697 49 24"><path d="M1201 702h6v6h-6zM1201 709.500h6v6h-6zM1208.500 709.500h6.500v6h-6.500z" fill="#ddd"/><path d="M1226 703.500h5M1228.500 701v5" stroke="#ddd"/><path d="M1228 706h6v5h-6z" fill="#aaa"/><path d="M1233 710h7v6h-7z" fill="#ddd"/><path d="M1238 710v-3q2-2 4 0v2" fill="none" stroke="#ddd" stroke-width="1.300"/></svg>
      <svg class="btn on flush" width="23" height="24" viewBox="1246 697 23 24"><path d="M1253 712v-8q3-4 5 0v9q-2 3-5 1M1255.500 705v6" fill="none" stroke="#fff" stroke-width="1.200"/><path d="M1257 709h8v7h-8z" fill="#fff"/><path d="M1259 709v-2q2-2 4 0v2" stroke="#fff" fill="none"/></svg>
      <svg class="btn m1" width="58" height="24" viewBox="1272 697 58 24"><path d="M1279 701h15v15h-15z" fill="#f2e4d8"/><path d="M1283 702h6v2h-1.500v9h2v2h-7v-2h2v-9H1283z" fill="#d86a1c"/><circle cx="1288" cy="715" r="2" fill="none" stroke="#c86838"/><circle cx="1292" cy="715" r="2" fill="none" stroke="#c86838"/><path d="M1307 701h8l4 4v8h-12z" fill="#2a62a8"/><path d="M1306 709h9v6h-9z" fill="#e8b030"/><path d="M1307 706.500h10M1312 703v7" stroke="#fff"/><path d="M1315 713l3 3 4-5" fill="none" stroke="#35c070" stroke-width="2"/></svg>
      <svg class="btn m2" width="24" height="24" viewBox="1334 697 24 24"><path d="M1338 703.500h16M1338 709h16M1338 714.500h16" stroke="#ddd" stroke-width="1.500"/></svg>
    </div>
  </footer>
</div>

<footer class="taskbar">
  <svg width="48" height="40" viewBox="0 728 48 40"><path d="M16 742.200l6.500-.9v6.200H16zM23.300 741.200l8.700-1.200v7.500h-8.700zM16 748.400h6.500v6.300l-6.500-.9zM23.300 748.400H32v7.600l-8.700-1.200z" fill="#000"/></svg>
  <div class="find"><svg width="39" height="38" viewBox="49 729 39 38"><circle cx="70.500" cy="745.500" r="5" fill="none" stroke="#222" stroke-width="1.300"/><path d="M67 749.500l-7 6.500" stroke="#222" stroke-width="1.300"/></svg><span>Type here to search</span>
    <svg class="end" width="72" height="38" viewBox="262 729 72 38"><path d="M288 736.500q2 9 11 11-9 2-11 11-2-9-11-11 9-2 11-11z" fill="url(#gold)" stroke="#f6bd22" stroke-width="1.500"/><path d="M311 745q1 5 6 6-5 1-6 6-1-5-6-6 5-1 6-6z" fill="url(#gold)"/><path d="M265 754l3 1 2-3 1 3 3 1-3 2v3l-3-2-3 1 1-3z" fill="#1a9ff0"/><circle cx="305" cy="738" r="2" fill="#ee6a20"/><circle cx="323" cy="757.500" r="2" fill="#8cc63e"/></svg></div>
  <svg width="52" height="40" viewBox="335 728 52 40"><path d="M352.500 739.500v4h10v-4M352.500 756v-3.500h10v3.500M352.500 745.500h10v5h-10zM366.500 740v4M366.500 750v6" transform="translate(.5 0)" fill="none" stroke="#000" stroke-width="1.200"/><path d="M365.500 745h3v3h-3z"/></svg>
  <svg width="53" height="40" viewBox="387 728 53 40"><circle cx="411" cy="748" r="12" fill="url(#edge)"/><path d="M399 750q1-9 11-9 8 1 8 6-1 3-4 2 1-5-4-5-6 1-5 8 1 7 9 8-12 2-15-10z" fill="#1573cf"/><path d="M408 749q0-4 4-3 2 1 1 4 1 3 8 2-3 4-8 2-5-1-5-5z" fill="#d8edf6"/><path d="M407 751q3 8 14 5-5 5-10 3-5-2-4-8z" fill="#0c4f9c"/></svg>
  <svg class="run" width="40" height="40" viewBox="440 728 40 40"><path d="M449 739h9l2 2h10v15h-21z" fill="#ffd464"/><path d="M449 739h9v3h-9z" fill="#d9960c"/><path d="M453 757v-7q0-1 1-1h11q2 0 2 1v7h-4v-4h-6v4z" fill="#3b97dc"/></svg>
  <svg width="54" height="40" viewBox="480 728 54 40"><path d="M497 742l12-5 12 5v14h-24z" fill="#3c4448"/><path d="M498 743h22l-7 4.500 3.500 4z" fill="#d5e9f1"/></svg>
  <svg class="run cur" width="48" height="40" viewBox="534 728 48 40"><path d="M547 738l4-2v17l-4-2z" fill="#ee6f90"/><path d="M551 738h18v20h-18z" fill="#9c1238"/><path d="M550 736h17v17h-17z" fill="#e51050"/><path d="M549 753h18v7h-18z" fill="#6c0a28"/><text x="558.500" y="749" class="tA">A</text><text x="558.500" y="758.500" class="tM">MEC</text></svg>
  <svg class="end" width="178" height="40" viewBox="1035 728 178 40"><path d="M1043.500 741.500h20v13h-20zM1064 743.500h2.500v9l-2 2" fill="none" stroke="#111" stroke-width="1.600"/><path d="M1046 745h7v6h-7zM1056 745.500h5M1056 748.500h5M1056 751h5" fill="none" stroke="#111" stroke-width="1.300"/><path d="M1093.500 751l5.500-5.500 5.500 5.500" fill="none" stroke="#111" stroke-width="1.400"/><rect x="1119" y="744" width="7" height="8" rx="1.500" fill="none" stroke="#111" stroke-width="1.300"/><path d="M1126 747l2.500-1.500v5l-2.500-1.500M1119.500 741q3.500-2 7 0M1119.500 755q3.500 2 7 0" fill="none" stroke="#111"/><path d="M1140.500 744.500h12v7h-12zM1153 747h1.500v2.500h-1.500" fill="none" stroke="#111" stroke-width="1.200"/><path d="M1142 746h4v4.500h-4z"/><circle cx="1170.500" cy="747.500" r="7" fill="none" stroke="#111" stroke-width="1.200"/><path d="M1163.500 745h14M1164 750h9M1170.500 740.500v14M1167 754q-3-6.500 0-13M1174 754q3-6.500 0-13" fill="none" stroke="#111"/><circle cx="1176" cy="752" r="4" fill="#d3dfea" stroke="#111" stroke-width="1.200"/><path d="M1173.500 754.500l5-5" stroke="#111"/><path d="M1187.500 745.500h3l4-3.500v11.500l-4-3.500h-3z" fill="none" stroke="#111" stroke-width="1.200"/><path d="M1196.500 745.500q1.500 2 0 4.500" fill="none" stroke="#111"/><path d="M1198.500 743.500q3 4 0 8M1201 742q4 5.500 0 11.500" fill="none" stroke="#777"/></svg>
  <span class="lang">ENG</span>
  <div class="clock"><span>17:04</span><span>05-06-2025</span></div>
  <svg width="54" height="40" viewBox="1312 728 54 40"><path d="M1325.500 740.500h15v12h-4v3.500l-4-3.500h-7z" fill="none" stroke="#111" stroke-width="1.300"/><path d="M1361.500 728v40" stroke="#b4bac8"/></svg>
</footer>
</body>
</html>
```
FILE: styles.css
```css
* { box-sizing: border-box; }
body { margin: 0; width: 1366px; height: 768px; overflow: hidden; background: linear-gradient(90deg, transparent 10px, #f4f7fa 10px), linear-gradient(#f4f7fa 0 23px, #0563ab 23px 45px, #f4f7fa 45px); font: 12px/15px "Open Sans", "Noto Sans", sans-serif; letter-spacing: -.35px; color: #f0f0f0; }
svg { display: block; flex: none; }
svg text { letter-spacing: 0; }
.defs { position: absolute; }
.window { width: 1362px; height: 728px; margin: 0 2px; background: #222831; border: 1px solid #0e90d8; display: flex; flex-direction: column; white-space: nowrap; }
.end { margin-left: auto; }
.titlebar { height: 31px; flex: none; display: flex; padding: 0 4px; align-items: center; }
.lgA { font: bold 13px "Open Sans", sans-serif; fill: #fff; text-anchor: middle; }
.lgM { font: bold 7.500px "Open Sans", sans-serif; fill: #fff; text-anchor: middle; }
.workspace { width: 178px; height: 20px; background: #3b4453; display: flex; align-items: center; margin-top: 3px; }
.workspace span { margin-left: -5px; letter-spacing: -.25px; }
.share { width: 51px; margin-top: 3px; color: #8fcdfa; }
.doc { width: 100px; letter-spacing: -.3px; }
.search { width: 178px; height: 20px; margin-top: 3px; background: #485163; color: #b4bac4; font-style: italic; font-size: 11.500px; line-height: 20px; padding-left: 3px; letter-spacing: -.4px; }
.user { width: 82px; margin-top: 4px; letter-spacing: -.3px; }
.trial { width: 44px; height: 26px; background: #6360ff; display: flex; align-items: center; margin-top: 3px; }
.help { font: bold 13px "Open Sans", sans-serif; fill: #30363f; text-anchor: middle; }
.menubar { height: 21px; flex: none; border-bottom: 1px solid #3b4453; padding: 0 9px 0 17px; display: grid; grid-template-columns: 42px 44px 49px 53px 62px 52px 51px 73px 62px 67px 81px 68px 49px 60px 1fr; line-height: 21px; color: #b8bdc5; }
.menubar svg { justify-self: end; }
.tabs { height: 24px; flex: none; padding: 4px 0 0 7px; display: grid; grid-template-columns: 53px 49px 69px 77px 63px 45px 63px 58px 62px 81px 89px 113px 30px; line-height: 20px; color: #b8bdc5; }
.tabs span { padding-left: 8.500px; }
.tabs .active { background: #3b4453; color: #fff; width: 51px; }
.ribbon { height: 105px; flex: none; margin: 0 4px; background: #3b4453; display: flex; }
.panel { height: 105px; border-right: 1px solid #222933; display: flex; flex-direction: column; }
.panel footer { height: 22px; display: flex; justify-content: center; align-items: center; gap: 6px; margin-top: auto; }
.p-draw { width: 231px; }
.p-cons { width: 171px; }
.p-detail { width: 99px; }
.p-modify { width: 129px; }
.p-layers { width: 213px; }
.p-annot { width: 111px; }
.tools { display: flex; padding: 6px 0 0 3px; height: 83px; }
.p-cons .tools { padding-left: 0; }
.p-detail .tools { padding-left: 11px; }
.p-annot .tools { padding-left: 11px; }
.big { display: flex; flex-direction: column; align-items: center; }
.big b { font-weight: 400; text-align: center; }
.w42 { width: 42px; }
.w44 { width: 44px; }
.w48 { width: 48px; }
.w50 { width: 50px; }
.w51 { width: 51px; }
.w70 { width: 70px; margin-left: 8px; }
.small { display: flex; flex-direction: column; padding-top: 2px; }
.grid4 { display: grid; grid-template-columns: 38px 24px 38px 24px; grid-auto-rows: 24px; padding: 8px 0 0 2px; }
.aa { font: bold 7.500px "Open Sans", sans-serif; fill: #ddd; }
.ldr { font: 11px "Open Sans", sans-serif; fill: #ddd; }
.spill { overflow: visible; }
.bigA { font: 600 39px "Open Sans", sans-serif; fill: #d8d8d8; text-anchor: middle; }
.stack { padding-top: 8px; }
.layer { width: 208px; height: 22px; margin-left: 2px; background: #4a5568; border: 1px solid #262c38; display: flex; align-items: center; }
.folded { display: flex; gap: 3px; padding: 1px; margin-top: 1px; background: #262d39; height: 103px; }
.folded > div { width: 58px; height: 101px; background: #4d586b; display: flex; flex-direction: column; align-items: center; }
.folded b { font-weight: 400; letter-spacing: -.4px; }
.down { margin: auto 0 4px; }
.doctabs { height: 27px; flex: none; padding: 3px 0 0 4px; display: flex; align-items: center; }
.start { width: 33px; }
.doctab { width: 124px; height: 24px; background: #3b4453; clip-path: polygon(9px 0, 100% 0, calc(100% - 9px) 100%, 0 100%); display: flex; align-items: center; padding-left: 16px; font-weight: 600; color: #fff; }
.doctab span { width: 86px; letter-spacing: -.2px; }
.canvas { position: relative; height: 482px; flex: none; }
.dim { font: 24.500px "Liberation Sans", sans-serif; fill: #ffff00; text-anchor: middle; }
.heading { font: 63px "Liberation Sans", sans-serif; fill: #fff; }
.vp { font: 12px "Open Sans", sans-serif; fill: #e8e8e8; }
.compass { font: bold 14px "Liberation Sans", sans-serif; fill: #b4b6b8; text-anchor: middle; }
.top { font: bold 9px "Open Sans", sans-serif; fill: #4a525a; text-anchor: middle; }
.wcs { font: 11.500px "Liberation Sans", sans-serif; fill: #5b5f69; }
.watermark { position: absolute; left: 1070px; top: 442px; color: #85888c; }
.watermark p { margin: 0; font-size: 19px; line-height: 22px; letter-spacing: .05px; }
.watermark p + p { font-size: 14.500px; line-height: 23px; letter-spacing: -.05px; }
.cmd { position: absolute; left: 288px; top: 455px; height: 27px; display: flex; align-items: center; background: #2a303c; }
.prompt { width: 725px; height: 25px; background: #bdbec0; display: flex; align-items: center; color: #5e6064; font: italic 12px/25px "DejaVu Sans Mono", monospace; letter-spacing: -.2px; border-radius: 2px; }
.layoutbar { height: 36px; flex: none; margin: 0 3px; border-top: 4px solid #3b4453; display: flex; }
.layoutbar > svg:first-child { margin-left: 1px; }
.model { width: 70px; height: 24px; background: #3b4453; clip-path: polygon(10px 0, 100% 0, calc(100% - 10px) 100%, 0 100%); padding-left: 17px; font-weight: 700; line-height: 25px; color: #fff; }
.lay1 { width: 52px; padding-left: 6px; line-height: 25px; }
.lay2 { width: 55px; padding-left: 6px; line-height: 25px; }
.status { margin-left: auto; margin-right: 2px; padding-top: 2px; display: flex; gap: 2px; }
.btn { background: #3b4453; }
.on { background: #5f8fc4; }
.flush { margin-left: -2px; }
.m1 { margin-left: 1px; }
.m2 { margin-left: 2px; }
.mode { width: 47px; height: 24px; line-height: 24px; text-align: center; background: #3b4453; font-size: 12.500px; color: #fff; }
.taskbar { height: 40px; background: linear-gradient(90deg, #cfe6ee, #cfe2ee 50%, #d4dbe9 80%, #d6d9e8); display: flex; color: #111; white-space: nowrap; }
.find { width: 287px; height: 40px; border: 1px solid #bfc4c6; background: #fff; display: flex; align-items: center; font-size: 15px; letter-spacing: -.55px; color: #333; }
.run { border-bottom: 2px solid #0078d7; height: 40px; }
.cur { background: #eaf3f8; }
.tA { font: bold 13px "Open Sans", sans-serif; fill: #fff; text-anchor: middle; }
.tM { font: bold 6px "Open Sans", sans-serif; fill: #fff; text-anchor: middle; }
.lang { width: 29px; line-height: 40px; letter-spacing: -.6px; }
.clock { width: 70px; display: flex; flex-direction: column; align-items: center; padding-top: 2px; line-height: 18px; letter-spacing: -.45px; }
```
